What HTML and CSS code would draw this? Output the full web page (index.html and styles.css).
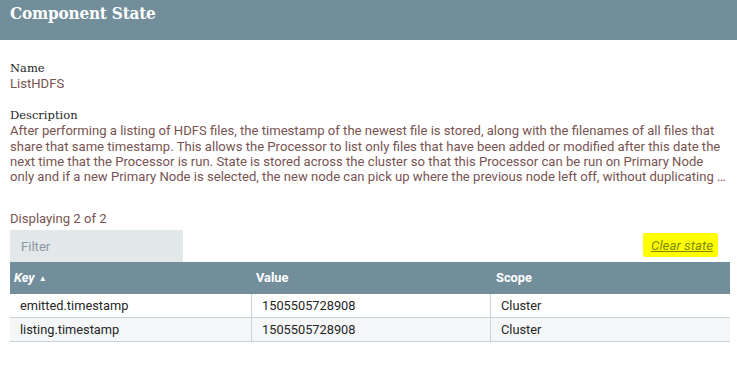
FILE: index.html
```html
<!DOCTYPE html>
<html>
<head>
<meta charset="utf-8">
<link rel="stylesheet" href="styles.css">
</head>
<body>
<div class="dialog">
  <div class="dialog-header">Component State</div>
  <div class="dialog-content">
    <div class="setting">
      <div class="setting-name">Name</div>
      <div class="setting-field">ListHDFS</div>
    </div>
    <div class="setting">
      <div class="setting-name">Description</div>
      <div class="setting-field description">After performing a listing of HDFS files, the timestamp of the newest file is stored, along with the filenames of all files that share that same timestamp. This allows the Processor to list only files that have been added or modified after this date the next time that the Processor is run. State is stored across the cluster so that this Processor can be run on Primary Node only and if a new Primary Node is selected, the new node can pick up where the previous node left off, without duplicating …</div>
    </div>
    <div class="displaying">Displaying 2 of 2</div>
    <div class="toolbar">
      <div class="filter">Filter</div>
      <a class="clear-state">Clear state</a>
    </div>
    <div class="grid">
      <div class="grid-row grid-head">
        <div class="cell key sorted">Key <span class="arrow">▲</span></div>
        <div class="cell value">Value</div>
        <div class="cell scope">Scope</div>
      </div>
      <div class="grid-row">
        <div class="cell key">emitted.timestamp</div>
        <div class="cell value">1505505728908</div>
        <div class="cell scope">Cluster</div>
      </div>
      <div class="grid-row odd">
        <div class="cell key">listing.timestamp</div>
        <div class="cell value">1505505728908</div>
        <div class="cell scope">Cluster</div>
      </div>
    </div>
  </div>
</div>
</body>
</html>
```

FILE: styles.css
```css
* { box-sizing: border-box; }
html, body { margin: 0; padding: 0; background: #fff; }
body { font-family: Roboto, "Liberation Sans", sans-serif; }
.dialog { width: 737px; }
.dialog-header {
  height: 40px;
  background: #728e9b;
  color: #fff;
  font-family: "DejaVu Serif Condensed", "DejaVu Serif", serif;
  font-weight: bold;
  font-size: 17px;
  padding: 2px 0 0 10px;
  line-height: 22px;
  letter-spacing: -0.2px;
}
.dialog-content { padding: 21px 7px 0 10px; }
.setting { margin-bottom: 17px; }
.setting-name {
  font-family: "DejaVu Serif", "Liberation Serif", serif;
  font-size: 11.5px;
  color: #262626;
  line-height: 15px;
}
.setting-field {
  font-size: 13.1px;
  color: #775351;
  line-height: 15.3px;
}
.description {
  max-height: 61.2px;
  overflow: hidden;
}
.setting:nth-child(2) { margin-bottom: 27px; }
.displaying {
  font-size: 13.1px;
  color: #775351;
  line-height: 15px;
  margin-bottom: 4px;
}
.toolbar {
  display: flex;
  justify-content: space-between;
  align-items: flex-end;
  height: 32px;
  padding-right: 12px;
}
.filter {
  width: 173px;
  height: 32px;
  background: #e3e8eb;
  color: #8a98a0;
  font-size: 13.1px;
  line-height: 33px;
  padding-left: 11px;
}
.clear-state {
  font-style: italic;
  font-size: 13.3px;
  color: #7e8a00;
  text-decoration: underline;
  background: #ffff00;
  padding: 5px 5px 4px 8px;
  margin-bottom: 5px;
  line-height: 15px;
  border-radius: 2px;
}
.grid { width: 720px; }
.grid-row { display: flex; height: 24px; border-bottom: 1px solid #c7d2d7; }
.grid-row.odd { background: #f4f6f7; }
.grid-head { height: 32px; background: #728e9b; border-bottom: 0; color: #fff; font-weight: bold; }
.cell { font-size: 12.8px; line-height: 23px; padding-left: 10px; color: #262626; }
.grid-head .cell { color: #fff; font-size: 12.8px; line-height: 32px; }
.key { width: 241px; }
.value { width: 239px; border-left: 1px solid #c7d2d7; }
.scope { flex: 1; border-left: 1px solid #c7d2d7; }
.grid-head .key { padding-left: 4px; }
.grid-head .value, .grid-head .scope { border-left: 0; padding-left: 5px; }
.grid-head .value { width: 240px; }
.sorted { font-style: italic; }
.arrow { font-size: 8px; font-style: normal; vertical-align: 1px; margin-left: 1px; }
```
